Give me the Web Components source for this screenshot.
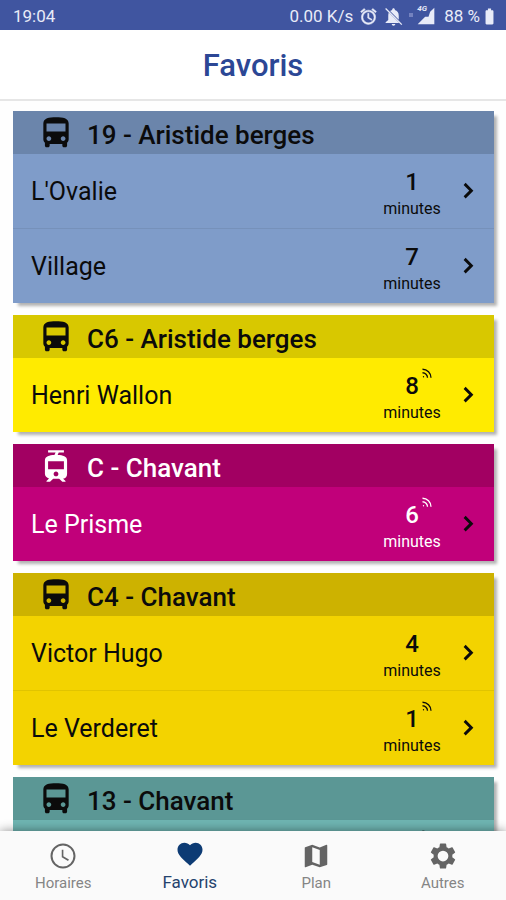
<!DOCTYPE html>
<html lang="fr">
<head>
<meta charset="utf-8">
<meta name="viewport" content="width=device-width, initial-scale=1">
<title>Favoris</title>
<style>
  html, body { height: 100%; margin: 0; }
  body { font-family: Roboto, "Liberation Sans", sans-serif; background: #fefefe; color: #0b0b0b; }
</style>
</head>
<body>
<favorites-app></favorites-app>

<script>
const ICONS = {
  bus: '<path d="M4 16c0 .88.39 1.67 1 2.22V20c0 .55.45 1 1 1h1c.55 0 1-.45 1-1v-1h8v1c0 .55.45 1 1 1h1c.55 0 1-.45 1-1v-1.78c.61-.55 1-1.34 1-2.22V6c0-3.5-3.58-4-8-4s-8 .5-8 4v10zm3.5 1c-.83 0-1.5-.67-1.5-1.5S6.67 14 7.5 14s1.5.67 1.5 1.5S8.33 17 7.5 17zm9 0c-.83 0-1.5-.67-1.5-1.5s.67-1.5 1.5-1.5 1.5.67 1.5 1.5-.67 1.5-1.5 1.5zm1.500-6H6V6h12v5z"/>',
  tram: '<path d="M19 16.940V8.500c0-2.790-2.610-3.400-6.010-3.490l.760-1.510H17V2H7v1.500h4.750l-.760 1.520C7.860 5.110 5 5.730 5 8.500v8.440c0 1.450 1.190 2.660 2.590 2.970L6 21.500v.500h2.230l2-2H14l2 2h2v-.500L16.500 20h-.080c1.690 0 2.580-1.370 2.580-3.060zm-7 1.560c-.830 0-1.500-.670-1.500-1.500s.670-1.500 1.500-1.500 1.500.670 1.500 1.500-.670 1.500-1.500 1.500zm5-4.500H7V9h10v5z"/>',
  live: '<g fill="none" stroke="currentColor" stroke-width="2.600"><path d="M3 4.500A17 17 0 0 1 20 21.500"/><path d="M3 11.500A10 10 0 0 1 13 21.500"/></g><circle cx="5" cy="19.500" r="1.300"/>',
  chevron: '<path fill="none" stroke="currentColor" stroke-width="3.800" d="M7.500 2.500 16.500 11.500l-9 9"/>',
  clock: '<path d="M11.990 2C6.470 2 2 6.480 2 12s4.470 10 9.990 10C17.520 22 22 17.520 22 12S17.520 2 11.990 2zM12 20.400a8.400 8.400 0 1 1 0-16.800 8.400 8.400 0 0 1 0 16.800zM12.300 7H11v6l5 3 .750-1.230-4.450-2.650z"/>',
  heart: '<path d="M12 21.350l-1.450-1.320C5.400 15.360 2 12.280 2 8.500 2 5.420 4.420 3 7.500 3c1.740 0 3.410.810 4.500 2.090C13.090 3.810 14.760 3 16.500 3 19.580 3 22 5.420 22 8.500c0 3.780-3.400 6.860-8.550 11.540L12 21.350z"/>',
  map: '<path d="M20.500 3l-.160.030L15 5.100 9 3 3.360 4.900c-.210.070-.360.250-.360.480V20.500c0 .280.220.500.500.500l.160-.030L9 18.900l6 2.100 5.640-1.900c.210-.070.360-.250.360-.480V3.500c0-.280-.220-.500-.500-.500zM15 19l-6-2.110V5l6 2.110V19z"/>',
  gear: '<path d="M19.430 12.980c.040-.320.070-.640.070-.980s-.030-.660-.070-.980l2.110-1.650c.190-.150.240-.420.120-.640l-2-3.460c-.120-.220-.390-.300-.610-.220l-2.490 1c-.520-.400-1.080-.730-1.690-.980l-.380-2.650C14.460 2.180 14.250 2 14 2h-4c-.250 0-.460.180-.490.420l-.380 2.650c-.610.250-1.170.590-1.690.980l-2.490-1c-.230-.090-.490 0-.610.220l-2 3.460c-.130.220-.070.490.120.640l2.110 1.650c-.040.320-.070.650-.070.980s.030.660.070.980l-2.110 1.650c-.190.150-.240.420-.120.640l2 3.460c.120.220.390.300.610.220l2.490-1c.520.400 1.080.730 1.690.980l.380 2.650c.030.240.240.420.490.420h4c.250 0 .460-.180.490-.420l.380-2.650c.610-.250 1.170-.590 1.690-.980l2.490 1c.230.090.490 0 .610-.220l2-3.460c.120-.220.070-.490-.120-.640l-2.110-1.650zM12 16.300a4.300 4.300 0 1 1 0-8.600 4.300 4.300 0 0 1 0 8.600z"/>',
  alarm: '<path stroke="currentColor" stroke-width=".6" d="M22 5.720l-4.600-3.860-1.290 1.530 4.600 3.860L22 5.720zM7.880 3.390L6.600 1.860 2 5.710l1.290 1.530 4.590-3.850zM12.500 8H11v6l4.750 2.850.750-1.230-4-2.370V8zM12 4c-4.970 0-9 4.030-9 9s4.020 9 9 9a9 9 0 1 0 0-18zm0 16c-3.870 0-7-3.130-7-7s3.130-7 7-7 7 3.130 7 7-3.130 7-7 7z"/>',
  mute: '<path d="M12 22.500c1.100 0 2-.9 2-2h-4c0 1.100.9 2 2 2zM18 11c0-3.080-1.640-5.640-4.500-6.320V4c0-.83-.67-1.500-1.500-1.500S10.500 3.170 10.500 4v.68c-.9.200-1.700.600-2.400 1.120L18 15.700zM6.600 7.400C6.200 8.500 6 9.700 6 11v5l-3 2.500V19.500h15.600z"/><path fill="none" stroke="currentColor" stroke-width="1.500" d="M3 2.800 21.500 21.300"/>',
  signal: '<path d="M22 2v20H2l9-9h4l2-6z"/>',
  battery: '<path d="M15.670 4H14V2h-4v2H8.330C7.600 4 7 4.600 7 5.330v15.330C7 21.400 7.600 22 8.330 22h7.330c.740 0 1.340-.600 1.340-1.330V5.330C17 4.600 16.400 4 15.670 4z"/>'
};

const make = (host, html) => {
  const t = document.createElement('template');
  t.innerHTML = html;
  host.attachShadow({ mode: 'open' }).append(t.content.cloneNode(true));
};

customElements.define('app-icon', class extends HTMLElement {
  connectedCallback() {
    if (this.shadowRoot) return;
    make(this, `<style>
      :host { display: block; flex: none; width: var(--size, 24px); height: var(--size, 24px); }
      svg { display: block; width: 100%; height: 100%; fill: currentColor; }
    </style><svg viewBox="0 0 24 24" aria-hidden="true">${ICONS[this.getAttribute('name')]}</svg>`);
  }
});

customElements.define('status-bar', class extends HTMLElement {
  connectedCallback() {
    make(this, `<style>
      :host { display: flex; align-items: center; height: 30px; padding: 2px 7px 0 13px; box-sizing: border-box;
        background: #4055a0; color: #e8ebf8; font-size: 17px; line-height: 20px; }
      .rate { margin-left: auto; }
      app-icon { --size: 20px; }
      .alarm { margin-left: 6px; --size: 19px; }
      .mute { margin-left: 5px; --size: 21px; }
      .cell { position: relative; margin-left: 12px; }
      .net { position: absolute; left: 1px; top: -1px; font-size: 8px; line-height: 8px; font-weight: 700; font-style: italic; }
      .sim { position: absolute; left: -7px; top: 7px; width: 4px; height: 4px; background: #7482bf; }
      .level { margin-left: 8px; }
      .batt { --size: 19px; }
    </style>
    <span>19:04</span><span class="rate">0.00 K/s</span>
    <app-icon class="alarm" name="alarm"></app-icon>
    <app-icon class="mute" name="mute"></app-icon>
    <div class="cell"><i class="sim"></i><span class="net">4G</span><app-icon name="signal"></app-icon></div>
    <span class="level">88 %</span><app-icon class="batt" name="battery"></app-icon>`);
  }
});

customElements.define('page-header', class extends HTMLElement {
  connectedCallback() {
    make(this, `<style>
      :host { display: flex; align-items: center; justify-content: center; height: 71px; box-sizing: border-box;
        padding-top: 2px; border-bottom: 2px solid #e6e6e6; background: #fff; }
      h1 { margin: 0; font-size: 31px; line-height: 36px; font-weight: 500; color: #2c4795; }
    </style><h1><slot></slot></h1>`);
  }
});

customElements.define('line-card', class extends HTMLElement {
  connectedCallback() {
    make(this, `<style>
      :host { display: block; background: var(--line); color: var(--ink, #0b0b0b); box-shadow: 4px 4px 3px -1px rgba(0,0,0,.3); }
      header { display: flex; align-items: center; gap: 12px; height: 43px; padding: 0 24px; background: var(--head); }
      app-icon { --size: 38px; }
      h2 { margin: 0; padding-top: 4px; font-size: 26px; line-height: 30px; font-weight: 500; }
    </style>
    <section><header><app-icon name="${this.getAttribute('mode')}"></app-icon><h2>${this.getAttribute('heading')}</h2></header><slot></slot></section>`);
  }
});

customElements.define('stop-row', class extends HTMLElement {
  connectedCallback() {
    const live = this.hasAttribute('live') ? '<app-icon class="live" name="live"></app-icon>' : '';
    const wait = this.getAttribute('minutes') || '';
    make(this, `<style>
      :host { display: block; }
      :host(:not(:last-child)) { border-bottom: 1px solid rgba(0,0,0,.07); }
      a { display: flex; align-items: center; height: 74px; padding: 0 17px 0 18px; color: inherit; text-decoration: none; }
      .name { flex: 1; padding-top: 2px; font-size: 25px; line-height: 30px; }
      .wait { position: relative; width: 70px; padding-top: 4px; text-align: center; }
      b { display: block; min-height: 28px; font-size: 24px; line-height: 28px; font-weight: 500; }
      small { display: block; min-height: 20px; font-size: 16px; line-height: 20px; padding-top: 3px; }
      .live { --size: 12px; position: absolute; left: 44px; top: -1px; }
      .go { --size: 18px; color: #0b0b0b; margin-left: 12px; }
    </style>
    <a href="#"><span class="name"><slot></slot></span>
      <span class="wait"><b>${wait}</b>${live}<small>${wait && 'minutes'}</small></span>
      <app-icon class="go" name="chevron"></app-icon></a>`);
  }
});

customElements.define('tab-item', class extends HTMLElement {
  connectedCallback() {
    make(this, `<style>
      :host { display: block; flex: 1; color: #858585; --tint: #646464; }
      :host([active]) { color: #24426d; --tint: #0d3b74; }
      button { display: flex; flex-direction: column; align-items: center; width: 100%; height: 100%; margin: 0; padding: 10px 0 0;
        border: 0; background: none; color: inherit; font: 15px/20px Roboto, "Liberation Sans", sans-serif; gap: 2px; }
      app-icon { --size: 30px; color: var(--tint); }
      :host([active]) button { padding-top: 8px; font-size: 17px; gap: 3px; }
    </style><button type="button"><app-icon name="${this.getAttribute('icon')}"></app-icon><span><slot></slot></span></button>`);
  }
});

customElements.define('tab-bar', class extends HTMLElement {
  connectedCallback() {
    make(this, `<style>
      :host { display: block; position: relative; height: 69px; flex: none; background: #fafafa; box-shadow: 0 0 10px rgba(0,0,0,.45); }
      nav { display: flex; height: 100%; }
    </style><nav><slot></slot></nav>`);
  }
});

customElements.define('favorites-app', class extends HTMLElement {
  connectedCallback() {
    make(this, `<style>
      :host { display: flex; flex-direction: column; height: 100vh; overflow: hidden; }
      status-bar, page-header { flex: none; }
      main { flex: 1; min-height: 0; overflow-y: auto; scrollbar-width: none; display: flex; flex-direction: column; gap: 12px; padding: 10px 12px 12px 13px; }
      line-card { flex: none; }
      .blue { --head: #6b85ab; --line: #7f9cc9; }
      .yellow { --head: #d8c800; --line: #ffeb00; }
      .magenta { --head: #a20062; --line: #c1007a; --ink: #fff; }
      .gold { --head: #cdb200; --line: #f3d300; }
      .teal { --head: #5b9795; --line: #6fb5b2; }
    </style>
    <status-bar></status-bar>
    <page-header>Favoris</page-header>
    <main>
      <line-card class="blue" mode="bus" heading="19 - Aristide berges"><stop-row minutes="1">L'Ovalie</stop-row><stop-row minutes="7">Village</stop-row></line-card>
      <line-card class="yellow" mode="bus" heading="C6 - Aristide berges"><stop-row minutes="8" live>Henri Wallon</stop-row></line-card>
      <line-card class="magenta" mode="tram" heading="C - Chavant"><stop-row minutes="6" live>Le Prisme</stop-row></line-card>
      <line-card class="gold" mode="bus" heading="C4 - Chavant"><stop-row minutes="4">Victor Hugo</stop-row><stop-row minutes="1" live>Le Verderet</stop-row></line-card>
      <line-card class="teal" mode="bus" heading="13 - Chavant"><stop-row live></stop-row></line-card>
    </main>
    <tab-bar>
      <tab-item icon="clock">Horaires</tab-item>
      <tab-item icon="heart" active>Favoris</tab-item>
      <tab-item icon="map">Plan</tab-item>
      <tab-item icon="gear">Autres</tab-item>
    </tab-bar>`);
  }
});
</script>
</body>
</html>
